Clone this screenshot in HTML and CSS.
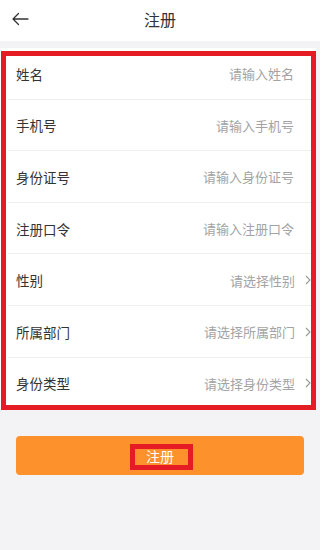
FILE: index.html
```html
<!DOCTYPE html>
<html lang="zh">
<head>
<meta charset="utf-8">
<title>注册</title>
<link rel="stylesheet" href="styles.css">
</head>
<body>
<div class="page">
  <header class="topbar">
    <svg class="back" width="18" height="14" viewBox="0 0 18 14">
      <path d="M17 7H2M7.5 1.5L2 7l5.5 5.5" fill="none" stroke="#333" stroke-width="1.3" stroke-linecap="round" stroke-linejoin="round"/>
    </svg>
    <h1 class="title">注册</h1>
  </header>
  <main class="content">
    <div class="form">
      <div class="row"><span class="label">姓名</span><span class="value">请输入姓名</span></div>
      <div class="row"><span class="label">手机号</span><span class="value">请输入手机号</span></div>
      <div class="row"><span class="label">身份证号</span><span class="value">请输入身份证号</span></div>
      <div class="row"><span class="label">注册口令</span><span class="value">请输入注册口令</span></div>
      <div class="row select"><span class="label">性别</span><span class="value">请选择性别</span><svg class="chev" width="6" height="10" viewBox="0 0 6 10"><path d="M1 1l4 4-4 4" fill="none" stroke="#999" stroke-width="1.1"/></svg></div>
      <div class="row select"><span class="label">所属部门</span><span class="value">请选择所属部门</span><svg class="chev" width="6" height="10" viewBox="0 0 6 10"><path d="M1 1l4 4-4 4" fill="none" stroke="#999" stroke-width="1.1"/></svg></div>
      <div class="row select last"><span class="label">身份类型</span><span class="value">请选择身份类型</span><svg class="chev" width="6" height="10" viewBox="0 0 6 10"><path d="M1 1l4 4-4 4" fill="none" stroke="#999" stroke-width="1.1"/></svg></div>
      <div class="mark form-mark"></div>
    </div>
    <div class="btn-wrap">
      <button class="btn"><span class="btn-text">注册</span><span class="mark btn-mark"></span></button>
    </div>
  </main>
</div>
</body>
</html>
```

FILE: styles.css
```css
* { box-sizing: border-box; }
html, body { margin: 0; padding: 0; }
body {
  font-family: "Noto Sans CJK SC", "Noto Sans", sans-serif;
  background: #f3f2f4;
  width: 320px;
  height: 550px;
  overflow: hidden;
}
.page { width: 320px; height: 550px; position: relative; }
.topbar {
  height: 41px;
  background: #fff;
  display: flex;
  align-items: center;
  justify-content: center;
  position: relative;
  padding-bottom: 3px;
}
.back { position: absolute; left: 11px; top: 12px; }
.title {
  margin: 0;
  font-size: 16px;
  font-weight: normal;
  color: #333;
  line-height: 1;
}
.content { padding-top: 7px; }
.form {
  position: relative;
  background: #fff;
  margin-right: 4px;
}
.row {
  height: 51.6px;
  display: flex;
  align-items: center;
  padding: 0 22px 0 16px;
  position: relative;
}
.row::after {
  content: "";
  position: absolute;
  left: 8px;
  right: 0;
  bottom: 0;
  height: 1px;
  background: #eeeeee;
}
.row.last::after { display: none; }
.row.select { padding-right: 5px; }
.label {
  font-size: 13.5px;
  color: #333;
  flex: 1;
}
.value {
  font-size: 13px;
  color: #a3a3a3;
}
.chev { margin-left: 10px; }
.mark {
  position: absolute;
  border: 5px solid #e51c23;
  pointer-events: none;
}
.form-mark {
  left: 1px;
  right: 0;
  top: 3px;
  bottom: -1px;
}
.btn-wrap { padding: 27px 16px 0 16px; }
.btn {
  position: relative;
  width: 288px;
  height: 39px;
  border: none;
  border-radius: 4px;
  background: #fd912c;
  color: #fff;
  font-family: "Noto Sans CJK SC", sans-serif;
  font-size: 14px;
  display: flex;
  align-items: center;
  justify-content: center;
  padding: 0;
}
.btn-text { line-height: 1; }
.btn-mark {
  left: 114px;
  top: 8px;
  width: 63px;
  height: 26px;
}
```
